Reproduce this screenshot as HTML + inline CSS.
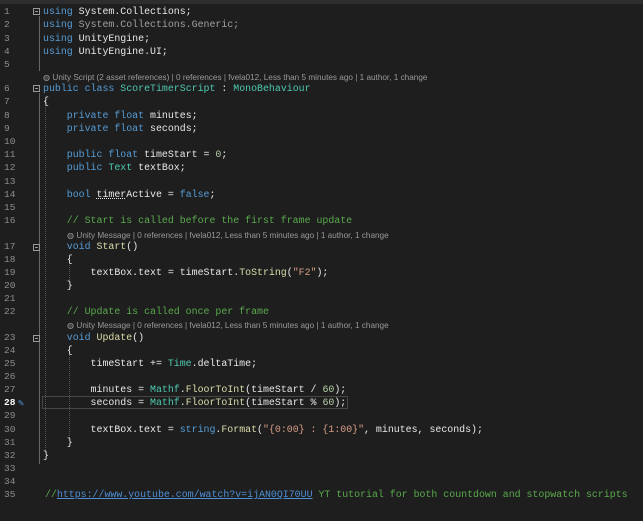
<!DOCTYPE html>
<html><head><meta charset="utf-8"><style>
body{margin:0;width:643px;height:521px;background:#1e1e1e;overflow:hidden;position:relative;font-family:"Liberation Mono",monospace;font-size:9.92px;color:#e8e8e8}
.l{position:absolute;left:43px;height:13px;line-height:13px;white-space:pre}
.n{position:absolute;left:4px;width:20px;height:13px;line-height:13px;color:#8e8e8e;font-size:9.5px}
.cl{position:absolute;left:67px;height:11px;line-height:11px;font-family:"Liberation Sans",sans-serif;font-size:8.2px;color:#9a9a9a;white-space:pre}
.k{color:#569cd6}.t{color:#4ec9b0}.c{color:#5aaa4d}.s{color:#d69d85}.m{color:#dcdcaa}.num{color:#b5cea8}.u{color:#4e8fd6;text-decoration:underline}
.f{position:absolute;left:33px;width:7px;height:7px;border:1px solid #999;box-sizing:border-box}
.f:after{content:"";position:absolute;left:1px;top:2px;width:3px;height:1px;background:#999}
.g{position:absolute;width:0;border-left:1px dotted #555}
.v{position:absolute;left:39px;width:1px;background:#666}
</style></head><body>
<div style="position:absolute;left:0;top:0;width:643px;height:4px;background:#2d2d30"></div>
<div class="v" style="top:16px;height:55px"></div>
<div class="v" style="top:93px;height:371px"></div>
<div class="g" style="left:45px;top:102px;height:350px"></div>
<div class="g" style="left:69px;top:260px;height:20px"></div>
<div class="g" style="left:69px;top:352px;height:86px"></div>
<div class="f" style="top:8px"></div>
<div class="f" style="top:85px"></div>
<div class="f" style="top:244px"></div>
<div class="f" style="top:335px"></div>
<div style="position:absolute;left:42px;top:396px;width:306px;height:13px;border:1px solid #464646;box-sizing:border-box"></div>

<div class="n" style="top:5px">1</div><div class="l" style="top:5px"><span class="k">using</span> System.Collections;</div>
<div class="n" style="top:18px">2</div><div class="l" style="top:18px;color:#a0a0a0"><span class="k">using</span> System.Collections.Generic;</div>
<div class="n" style="top:32px">3</div><div class="l" style="top:32px"><span class="k">using</span> UnityEngine;</div>
<div class="n" style="top:45px">4</div><div class="l" style="top:45px"><span class="k">using</span> UnityEngine.UI;</div>
<div class="n" style="top:58px">5</div>
<div class="cl" style="top:72px;left:43px">◍ Unity Script (2 asset references) | 0 references | fvela012, Less than 5 minutes ago | 1 author, 1 change</div>
<div class="n" style="top:82px">6</div><div class="l" style="top:82px"><span class="k">public class</span> <span class="t">ScoreTimerScript</span> : <span class="t">MonoBehaviour</span></div>
<div class="n" style="top:95px">7</div><div class="l" style="top:95px">{</div>
<div class="n" style="top:109px">8</div><div class="l" style="top:109px">    <span class="k">private float</span> minutes;</div>
<div class="n" style="top:122px">9</div><div class="l" style="top:122px">    <span class="k">private float</span> seconds;</div>
<div class="n" style="top:135px">10</div>
<div class="n" style="top:148px">11</div><div class="l" style="top:148px">    <span class="k">public float</span> timeStart = <span class="num">0</span>;</div>
<div class="n" style="top:161px">12</div><div class="l" style="top:161px">    <span class="k">public</span> <span class="t">Text</span> textBox;</div>
<div class="n" style="top:175px">13</div>
<div class="n" style="top:188px">14</div><div class="l" style="top:188px">    <span class="k">bool</span> <span style="text-decoration:underline dotted">timer</span>Active = <span class="k">false</span>;</div>
<div class="n" style="top:201px">15</div>
<div class="n" style="top:214px">16</div><div class="l" style="top:214px">    <span class="c">// Start is called before the first frame update</span></div>
<div class="cl" style="top:230px">◍ Unity Message | 0 references | fvela012, Less than 5 minutes ago | 1 author, 1 change</div>
<div class="n" style="top:240px">17</div><div class="l" style="top:240px">    <span class="k">void</span> <span class="m">Start</span>()</div>
<div class="n" style="top:253px">18</div><div class="l" style="top:253px">    {</div>
<div class="n" style="top:266px">19</div><div class="l" style="top:266px">        textBox.text = timeStart.<span class="m">ToString</span>(<span class="s">"F2"</span>);</div>
<div class="n" style="top:279px">20</div><div class="l" style="top:279px">    }</div>
<div class="n" style="top:292px">21</div>
<div class="n" style="top:305px">22</div><div class="l" style="top:305px">    <span class="c">// Update is called once per frame</span></div>
<div class="cl" style="top:320px">◍ Unity Message | 0 references | fvela012, Less than 5 minutes ago | 1 author, 1 change</div>
<div class="n" style="top:331px">23</div><div class="l" style="top:331px">    <span class="k">void</span> <span class="m">Update</span>()</div>
<div class="n" style="top:344px">24</div><div class="l" style="top:344px">    {</div>
<div class="n" style="top:357px">25</div><div class="l" style="top:357px">        timeStart += <span class="t">Time</span>.deltaTime;</div>
<div class="n" style="top:370px">26</div>
<div class="n" style="top:383px">27</div><div class="l" style="top:383px">        minutes = <span class="t">Mathf</span>.<span class="m">FloorToInt</span>(timeStart / <span class="num">60</span>);</div>
<div class="n" style="top:396px;color:#fff;font-weight:bold">28</div><div style="position:absolute;left:18px;top:398px;color:#4e8fd6;font-size:10px">✎</div><div class="l" style="top:396px">        seconds = <span class="t">Mathf</span>.<span class="m">FloorToInt</span>(timeStart % <span class="num">60</span>);</div>
<div class="n" style="top:409px">29</div>
<div class="n" style="top:423px">30</div><div class="l" style="top:423px">        textBox.text = <span class="k">string</span>.<span class="m">Format</span>(<span class="s">"{0:00} : {1:00}"</span>, minutes, seconds);</div>
<div class="n" style="top:436px">31</div><div class="l" style="top:436px">    }</div>
<div class="n" style="top:449px">32</div><div class="l" style="top:449px">}</div>
<div class="n" style="top:462px">33</div>
<div class="n" style="top:475px">34</div>
<div class="n" style="top:488px">35</div><div class="l" style="top:488px;left:45px"><span class="c">//</span><span class="u">https://www.youtube.com/watch?v=ijAN0QI70UU</span><span class="c"> YT tutorial for both countdown and stopwatch scripts</span></div>
</body></html>
